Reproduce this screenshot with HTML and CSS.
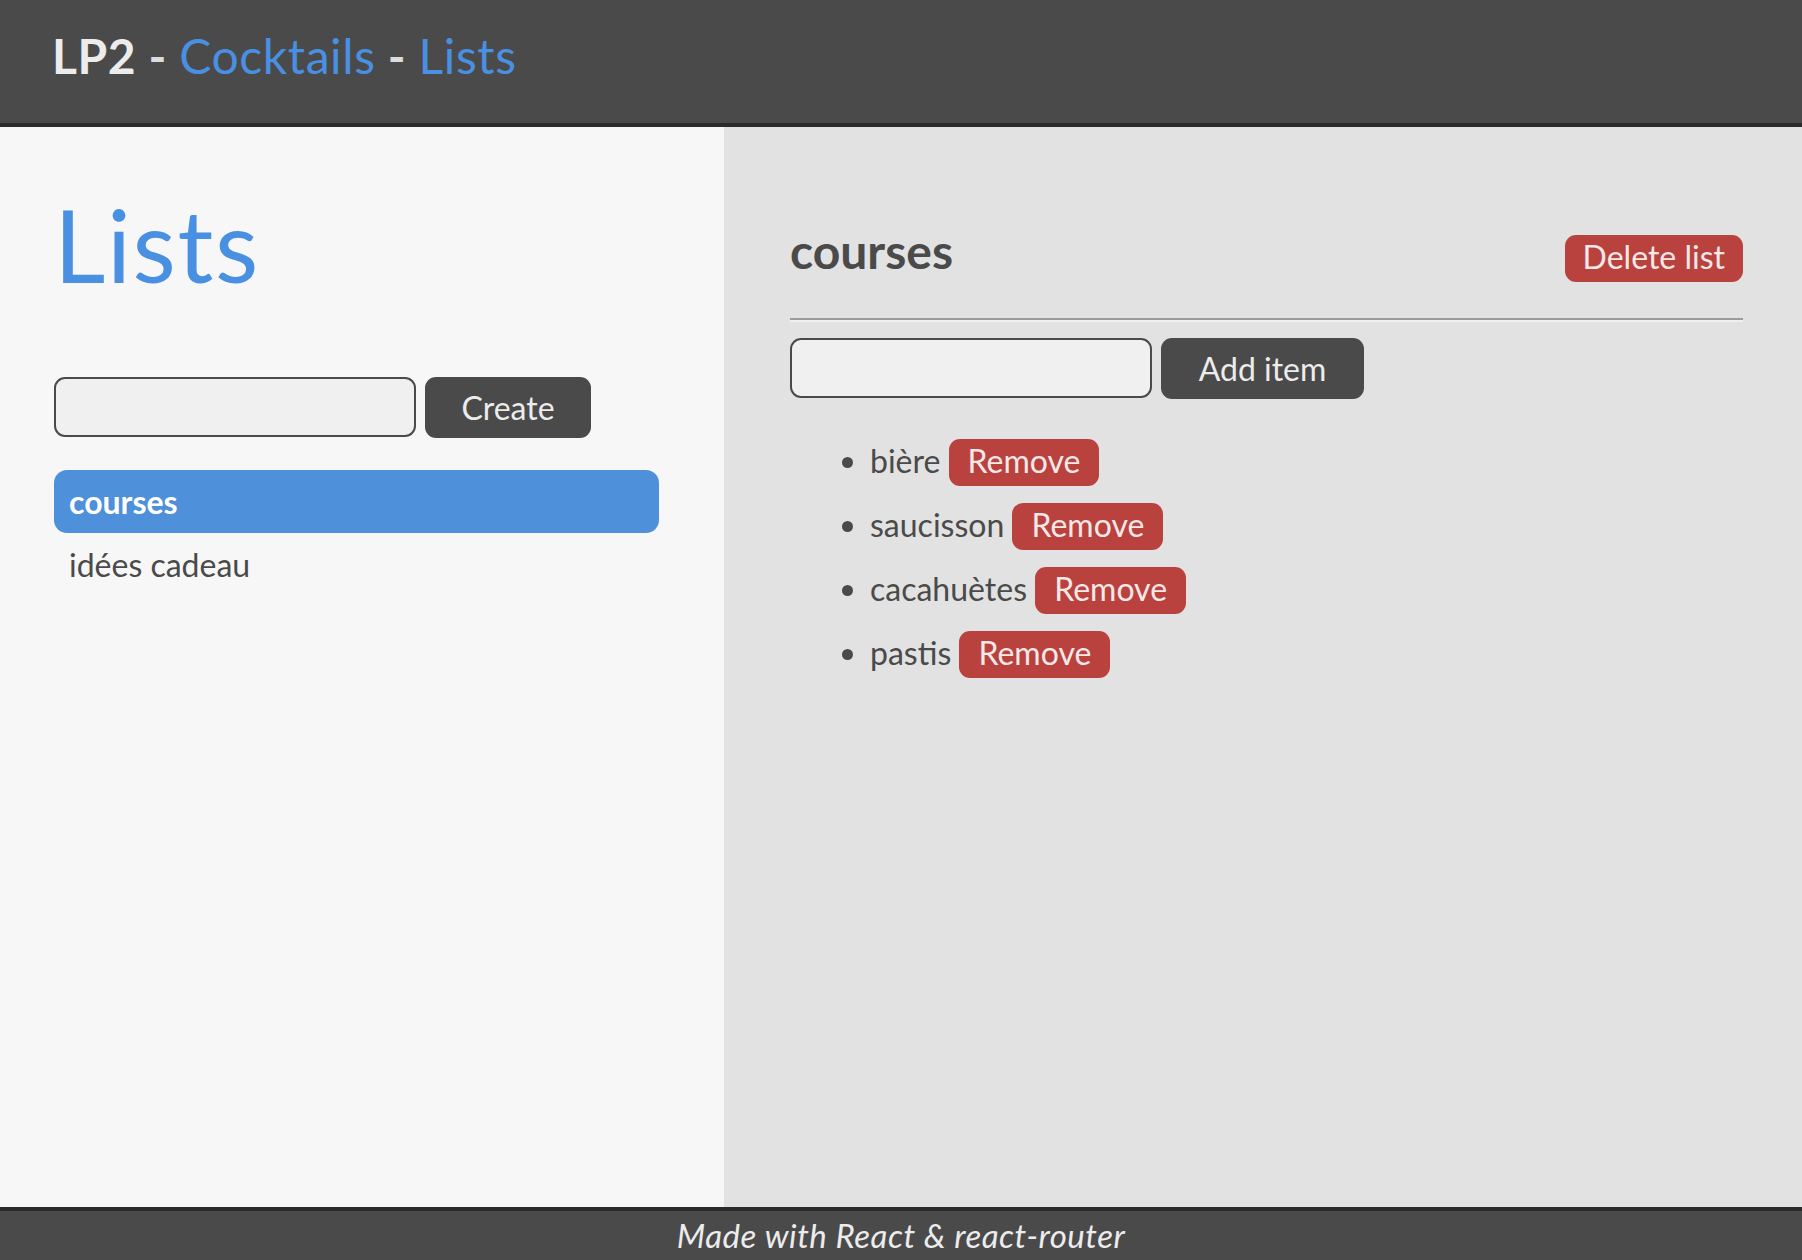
FILE: index.html
```html
<!DOCTYPE html>
<html lang="fr">
<head>
<meta charset="utf-8">
<title>LP2 - Cocktails - Lists</title>
<link rel="stylesheet" href="styles.css">
</head>
<body>
<header class="topbar">
  <span class="brand">LP2</span><span class="sep"> - </span><a class="nav-link" href="#">Cocktails</a><span class="sep"> - </span><a class="nav-link" href="#">Lists</a>
</header>
<main class="main">
  <aside class="sidebar">
    <h1 class="page-title">Lists</h1>
    <form class="inline-form">
      <input class="text-input" type="text">
      <button class="btn btn-dark" type="button">Create</button>
    </form>
    <ul class="list-nav">
      <li class="list-nav-item active">courses</li>
      <li class="list-nav-item">idées cadeau</li>
    </ul>
  </aside>
  <section class="detail">
    <div class="detail-head">
      <h2 class="detail-title">courses</h2>
      <button class="btn btn-red" type="button">Delete list</button>
    </div>
    <hr class="divider">
    <form class="inline-form">
      <input class="text-input" type="text">
      <button class="btn btn-dark btn-add" type="button">Add item</button>
    </form>
    <ul class="items">
      <li class="item">bière <button class="btn btn-red" type="button">Remove</button></li>
      <li class="item">saucisson <button class="btn btn-red" type="button">Remove</button></li>
      <li class="item">cacahuètes <button class="btn btn-red" type="button">Remove</button></li>
      <li class="item">pastis <button class="btn btn-red" type="button">Remove</button></li>
    </ul>
  </section>
</main>
<footer class="footer">Made with React &amp; react-router</footer>
</body>
</html>
```

FILE: styles.css
```css
html, body {
  margin: 0;
  padding: 0;
}

body {
  height: 100vh;
  display: flex;
  flex-direction: column;
  font-family: Lato, "Noto Sans", "Liberation Sans", sans-serif;
  font-size: 32px;
  color: #4a4a4a;
  background: #e2e2e2;
}

.topbar {
  box-sizing: border-box;
  flex: none;
  height: 127px;
  padding: 32px 0 0 52px;
  background: #4a4a4a;
  border-bottom: 4px solid #2b2b2b;
  font-size: 48px;
  line-height: 48px;
  letter-spacing: 0.6px;
  white-space: nowrap;
}

.brand {
  color: #ececec;
  font-weight: 700;
}

.sep {
  color: #dcdcdc;
  font-weight: 700;
}

.nav-link {
  color: #4a90e2;
  text-decoration: none;
}

.main {
  flex: 1;
  display: flex;
  min-height: 0;
}

.sidebar {
  box-sizing: border-box;
  flex: none;
  width: 724px;
  padding: 0 65px 0 54px;
  background: #f7f7f7;
}

.page-title {
  margin: 67px 0 0;
  font-size: 100px;
  line-height: 100px;
  font-weight: 400;
  letter-spacing: 1.6px;
  color: #4a90e2;
}

.sidebar .inline-form {
  margin-top: 83px;
}

.inline-form {
  display: flex;
  gap: 9px;
  margin: 0;
}

.text-input {
  box-sizing: border-box;
  width: 362px;
  height: 60px;
  margin: 0;
  padding: 0 14px;
  border: 2px solid #4a4a4a;
  border-radius: 11px;
  background: #f0f0f0;
  font: inherit;
  outline: none;
}

.btn {
  margin: 0;
  border: none;
  font-family: inherit;
  font-size: 32px;
  cursor: pointer;
}

.btn-dark {
  box-sizing: border-box;
  height: 61px;
  width: 166px;
  padding: 0;
  border-radius: 11px;
  background: #4a4a4a;
  color: #ececec;
  line-height: 61px;
}

.btn-add {
  width: 203px;
}

.btn-red {
  box-sizing: border-box;
  display: inline-block;
  height: 47px;
  padding: 0 19px 4px;
  border-radius: 11px;
  background: #b9423e;
  color: #f6e8e8;
  line-height: 43px;
  vertical-align: baseline;
}

.detail-head .btn-red {
  padding: 0 18px 4px;
}

.list-nav {
  list-style: none;
  margin: 32px 0 0;
  padding: 0;
}

.list-nav-item {
  height: 63px;
  line-height: 63px;
  padding-left: 15px;
  border-radius: 13px;
  color: #4a4a4a;
}

.list-nav-item.active {
  background: #4f90da;
  color: #ffffff;
  font-weight: 700;
}

.detail {
  box-sizing: border-box;
  flex: 1;
  padding: 0 59px 0 66px;
  background: #e2e2e2;
}

.detail-head {
  display: flex;
  justify-content: space-between;
  align-items: baseline;
  margin-top: 100px;
}

.detail-title {
  margin: 0;
  font-size: 48px;
  line-height: 48px;
  font-weight: 700;
  color: #4a4a4a;
}

.divider {
  height: 0;
  margin: 36px 0 16px;
  border: none;
  border-top: 2px solid #9b9b9b;
  border-bottom: 2px solid #efefef;
}

.items {
  margin: 30px 0 0;
  padding-left: 80px;
}

.item {
  line-height: 64px;
  color: #4a4a4a;
}

.footer {
  box-sizing: border-box;
  flex: none;
  height: 53px;
  border-top: 4px solid #2b2b2b;
  background: #4a4a4a;
  color: #ececec;
  font-style: italic;
  font-size: 33px;
  line-height: 48px;
  letter-spacing: 0.5px;
  text-align: center;
}
```
